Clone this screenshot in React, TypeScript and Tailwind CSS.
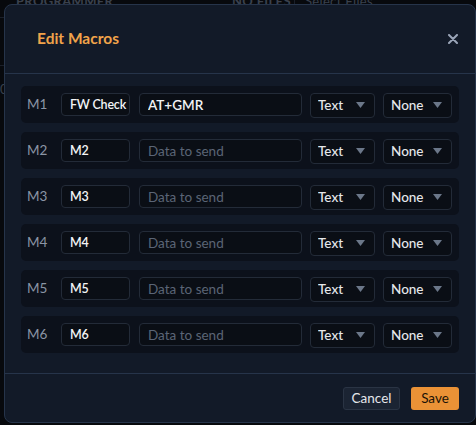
import React, { useState } from "react"

interface Macro {
  id: string
  name: string
  data: string
  type: string
  ending: string
}

const initialMacros: Macro[] = [
  { id: "M1", name: "FW Check", data: "AT+GMR", type: "Text", ending: "None" },
  { id: "M2", name: "M2", data: "", type: "Text", ending: "None" },
  { id: "M3", name: "M3", data: "", type: "Text", ending: "None" },
  { id: "M4", name: "M4", data: "", type: "Text", ending: "None" },
  { id: "M5", name: "M5", data: "", type: "Text", ending: "None" },
  { id: "M6", name: "M6", data: "", type: "Text", ending: "None" },
]

function SelectBox({ value, options, className }: { value: string; options: string[]; className: string }) {
  return (
    <div className={`relative h-[25px] ${className}`}>
      <select
        defaultValue={value}
        className="h-full w-full appearance-none rounded-[4px] border border-[#232b38] bg-[#0a0e15] pl-[7px] pr-6 text-[13.5px] font-medium text-[#e5e7eb] outline-none"
      >
        {options.map((o) => (
          <option key={o}>{o}</option>
        ))}
      </select>
      <svg className="pointer-events-none absolute right-[10px] top-[10px]" width="9" height="6" viewBox="0 0 9 6">
        <path d="M0 0h9L4.5 6z" fill="#6b7789" />
      </svg>
    </div>
  )
}

export default function App() {
  const [macros, setMacros] = useState<Macro[]>(initialMacros)

  const update = (i: number, key: "name" | "data", value: string) => {
    setMacros((prev) => prev.map((m, idx) => (idx === i ? { ...m, [key]: value } : m)))
  }

  return (
    <div className="relative h-[425px] w-[476px] overflow-hidden bg-[#07090d] font-['Lato',sans-serif]">
      {/* app behind the overlay */}
      <div className="flex h-[18px] items-start border-b border-[#1a1f29] text-[13px] font-bold tracking-wide text-[#3a414d]">
        <span className="-mt-[8px] ml-[16px] w-[216px]">PROGRAMMER</span>
        <span className="-mt-[8px] w-[62px]">NO FILES</span>
        <span className="-mt-[8px] border-l border-[#1a1f29] pl-[10px] font-normal">Select Files</span>
      </div>
      <div className="mt-[47px] border-t border-[#1a1f29]" />
      <div className="mt-[14px] text-[13px] text-[#3a414d]">0</div>

      {/* modal */}
      <div className="absolute left-[4px] top-[4px] flex h-[419px] w-[472px] flex-col rounded-[8px] border border-[#26344a] bg-[#121a28]">
        <div className="flex h-[69px] items-center justify-between border-b border-[#26344a] pl-[32px] pr-[17px]">
          <h2 className="text-[15.5px] font-bold text-[#f0a34a]">Edit Macros</h2>
          <button className="text-[#9aa5b8]">
            <svg width="10" height="10" viewBox="0 0 10 10">
              <path d="M1 1l8 8M9 1l-8 8" stroke="currentColor" strokeWidth="2" strokeLinecap="round" />
            </svg>
          </button>
        </div>

        <div className="flex flex-1 flex-col gap-[9px] px-[16px] pt-[12px]">
          {macros.map((m, i) => (
            <div key={m.id} className="flex h-[37px] items-center gap-[8px] rounded-[5px] bg-[#0c111b] pl-[6px] pr-[7px]">
              <span className="w-[26px] text-[13.5px] text-[#8b95a5]">{m.id}</span>
              <input
                value={m.name}
                onChange={(e) => update(i, "name", e.target.value)}
                className="h-[23px] w-[69px] rounded-[4px] border border-[#232b38] bg-[#0a0e15] pl-[8px] pr-[2px] text-[12.5px] font-semibold tracking-[-0.2px] text-[#f3f4f6] outline-none"
              />
              <input
                value={m.data}
                placeholder="Data to send"
                onChange={(e) => update(i, "data", e.target.value)}
                className="ml-[1px] h-[23px] w-[163px] rounded-[4px] border border-[#232b38] bg-[#0a0e15] px-[8px] text-[13.5px] font-semibold text-[#f3f4f6] outline-none placeholder:font-normal placeholder:text-[#5b6576]"
              />
              <SelectBox value={m.type} options={["Text", "Hex"]} className="w-[65px]" />
              <SelectBox value={m.ending} options={["None", "CR", "LF", "CRLF"]} className="w-[69px]" />
            </div>
          ))}
        </div>

        <div className="flex h-[49px] items-center justify-end gap-[11px] border-t border-[#26344a] pr-[16px]">
          <button className="h-[23px] w-[57px] rounded-[3px] border border-[#2a3444] bg-[#1b2433] text-[13.5px] text-[#e5e7eb]">
            Cancel
          </button>
          <button className="h-[23px] w-[48px] rounded-[3px] bg-[#ea9236] text-[13.5px] text-[#1a1206]">
            Save
          </button>
        </div>
      </div>
    </div>
  )
}
